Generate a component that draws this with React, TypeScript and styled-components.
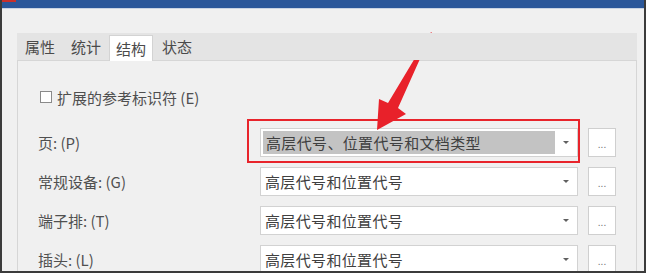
import { FC, Fragment } from 'react';
import styled, { createGlobalStyle } from 'styled-components';

const GlobalStyle = createGlobalStyle`
	html, body {
		margin: 0;
		padding: 0;
		background: #ffffff;
	}
	body {
		font-family: "Noto Sans CJK SC", "Noto Sans", sans-serif;
	}
	#root {
		width: 651px;
		height: 273px;
		overflow: hidden;
		position: relative;
	}
`;

/* DIALOG FRAME */
const Window = styled.div`
	width: 642px;
	height: 271px;
	display: flex;
	flex-direction: column;
	background: #f0f0f0;
	border-left: 2px solid #3b3b3b;
	border-right: 2px solid #3b3b3b;
	border-bottom: 2px solid #3b3b3b;
	overflow: hidden;
`;

const TitleBar = styled.div`
	height: 8px;
	flex: none;
	background: #2b579a;
	border-bottom: 1px solid #c9d3e3;
	position: relative;
`;

const TitleMark = styled.div`
	position: absolute;
	left: 0;
	top: 0;
	width: 14px;
	height: 2px;
	background: #c8302c;
`;

const Body = styled.div`
	flex: 1;
	padding: 24px 0 0 15px;
`;

/* TABS */
const TabControl = styled.div`
	width: 620px;
	display: flex;
	flex-direction: column;
`;

const TabStrip = styled.div`
	height: 27px;
	display: flex;
	align-items: flex-end;
	background: #e4e4e4;
	position: relative;
	z-index: 1;
`;

const Tab = styled.div<{ $active?: boolean }>`
	width: ${(p) => (p.$active ? '44px' : '46px')};
	height: ${(p) => (p.$active ? '26px' : '27px')};
	box-sizing: border-box;
	margin-bottom: ${(p) => (p.$active ? '-1px' : '0')};
	display: flex;
	align-items: center;
	justify-content: center;
	font-size: 15px;
	color: #4a4a4a;
	background: ${(p) => (p.$active ? '#ffffff' : 'transparent')};
	border: ${(p) => (p.$active ? '1px solid #d3d3d3' : 'none')};
	border-bottom: none;
	padding-bottom: ${(p) => (p.$active ? '0' : '1px')};
	margin-right: ${(p) => (p.$active ? '1px' : '0')};
`;

const Panel = styled.div`
	height: 230px;
	box-sizing: border-box;
	border: 1px solid #d6d6d6;
	background: #f0f0f0;
	padding: 26px 0 0 20px;
`;

/* CONTENT */
const CheckRow = styled.label`
	height: 20px;
	display: flex;
	align-items: center;
	gap: 5px;
	padding-left: 2px;
	font-size: 15px;
	color: #4f4f4f;
	margin-bottom: 21px;
`;

const CheckBox = styled.span`
	width: 12px;
	height: 12px;
	box-sizing: border-box;
	border: 1px solid #8a8a8a;
	background: #ffffff;
	flex: none;
`;

const Grid = styled.div`
	display: grid;
	grid-template-columns: 212px 318px 28px;
	column-gap: 10px;
	row-gap: 10px;
	grid-auto-rows: 29px;
`;

const Label = styled.div`
	display: flex;
	align-items: center;
	font-size: 15px;
	color: #505050;
	white-space: nowrap;
`;

const Combo = styled.div<{ $focused?: boolean }>`
	box-sizing: border-box;
	border: 1px solid #d2d2d2;
	background: #ffffff;
	display: flex;
	align-items: stretch;
	padding: ${(p) => (p.$focused ? '2px 0 2px 2px' : '0')};
`;

const ComboText = styled.div<{ $focused?: boolean }>`
	flex: 1;
	display: flex;
	align-items: center;
	padding-left: ${(p) => (p.$focused ? '3px' : '4px')};
	font-size: 15px;
	letter-spacing: 0.35px;
	color: #404040;
	background: ${(p) => (p.$focused ? '#c3c3c3' : 'transparent')};
	white-space: nowrap;
	overflow: hidden;
`;

const ComboArrow = styled.div`
	width: 22px;
	flex: none;
	display: flex;
	align-items: center;
	justify-content: center;
	&::after {
		content: '';
		border-left: 3px solid transparent;
		border-right: 3px solid transparent;
		border-top: 3px solid #606060;
	}
`;

const DotsButton = styled.div`
	box-sizing: border-box;
	border: 1px solid #cfcfcf;
	background: #ffffff;
	display: flex;
	align-items: flex-end;
	justify-content: center;
	padding-bottom: 6px;
	font-family: "Liberation Sans", sans-serif;
	font-size: 10px;
	line-height: 10px;
	color: #707070;
`;

/* ANNOTATION OVERLAY */
const Overlay = styled.svg`
	position: absolute;
	left: 0;
	top: 0;
	pointer-events: none;
`;

const rows = [
	{ label: '页: (P)', value: '高层代号、位置代号和文档类型', focused: true },
	{ label: '常规设备: (G)', value: '高层代号和位置代号' },
	{ label: '端子排: (T)', value: '高层代号和位置代号' },
	{ label: '插头: (L)', value: '高层代号和位置代号' }
];

const tabs = ['属性', '统计', '结构', '状态'];

const App: FC = () => {
	return (
		<>
			<GlobalStyle />
			<Window>
				<TitleBar>
					<TitleMark />
				</TitleBar>
				<Body>
					<TabControl>
						<TabStrip>
							{tabs.map((t) => (
								<Tab key={t} $active={t === '结构'}>
									{t}
								</Tab>
							))}
						</TabStrip>
						<Panel>
							<CheckRow>
								<CheckBox />
								扩展的参考标识符 (E)
							</CheckRow>
							<Grid>
								{rows.map((r) => (
									<Fragment key={r.label}>
										<Label>{r.label}</Label>
										<Combo $focused={r.focused}>
											<ComboText $focused={r.focused}>{r.value}</ComboText>
											<ComboArrow />
										</Combo>
										<DotsButton>...</DotsButton>
									</Fragment>
								))}
							</Grid>
						</Panel>
					</TabControl>
				</Body>
			</Window>
			<Overlay width="651" height="273" viewBox="0 0 651 273">
				<rect x="248" y="120" width="331" height="42" fill="none" stroke="#e8242b" strokeWidth="2" />
				<polygon
					points="432,32 398,108 406,114 377,130 379,99 388,103 430,33"
					fill="#e8212a"
				/>
			</Overlay>
		</>
	);
};

export default App;
